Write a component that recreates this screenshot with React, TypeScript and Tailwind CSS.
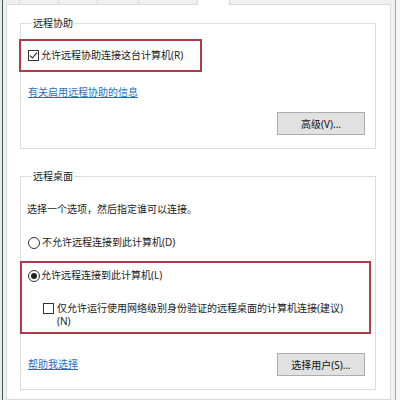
import React from "react";

function CheckBox({ checked }: { checked?: boolean }) {
  return (
    <div className="w-[11px] h-[11px] border border-[#333] bg-white flex items-center justify-center shrink-0">
      {checked && (
        <svg width="9" height="9" viewBox="0 0 9 9">
          <path d="M1 4.6 L3.4 7 L8 1.6" fill="none" stroke="#222" strokeWidth="1.1" />
        </svg>
      )}
    </div>
  );
}

function Radio({ checked }: { checked?: boolean }) {
  return (
    <div className="w-[12px] h-[12px] rounded-full border border-[#333] bg-white flex items-center justify-center shrink-0">
      {checked && <div className="w-[6px] h-[6px] rounded-full bg-[#222]" />}
    </div>
  );
}

function Button({ children }: { children: React.ReactNode }) {
  return (
    <div className="w-[88px] h-[23px] bg-[#e1e1e1] border border-[#adadad] flex items-center justify-center text-[10px] leading-[12px] text-[#111]">
      {children}
    </div>
  );
}

export default function App() {
  return (
    <div
      className="w-[400px] h-[400px] bg-[#f0f0f0] flex overflow-hidden text-[#1a1a1a]"
      style={{ fontFamily: '"Noto Sans", "Noto Sans CJK SC", sans-serif' }}
    >
      <div className="w-[2px] shrink-0 bg-[#e8ecec]" />
      <div className="w-[1px] shrink-0 bg-[#3f5656]" />
      <div className="w-[3px] shrink-0" />
      <div className="w-[385px] shrink-0 flex flex-col">
        <div className="h-[5px] flex shrink-0">
          <div className="w-[13px] border-b border-[#d9d9d9]" />
          <div className="w-[39px] border-l border-b border-[#d9d9d9]" />
          <div className="w-[39px] border-l border-b border-[#d9d9d9]" />
          <div className="w-[41px] border-l border-b border-[#d9d9d9]" />
          <div className="w-[59px] border-l border-b border-[#d9d9d9]" />
          <div className="w-[33px] border-l border-r border-[#d9d9d9] bg-white" />
          <div className="flex-1 border-b border-[#d9d9d9]" />
        </div>
        <div className="flex-1 bg-white border-x border-b border-[#d9d9d9] pl-[13px] pr-[14px] flex flex-col">
          <fieldset className="min-w-0 mt-[12px] border border-[#dcdcdc] pl-[7px] pr-[10px] pb-[13px]">
            <legend className="ml-[4px] px-[1px] text-[10px] leading-[12px]">远程协助</legend>
            <div className="mt-[10px] -ml-[9px] w-[183px] h-[33px] border-2 border-[#b23b4a] pl-[7px] flex items-center gap-[2px] text-[10px] leading-[13px]">
              <CheckBox checked />
              <span>允许远程协助连接这台计算机(R)</span>
            </div>
            <div className="mt-[14px] text-[10px] leading-[13px] text-[#1f6fbf] underline">
              有关启用远程协助的信息
            </div>
            <div className="mt-[13px] flex justify-end">
              <Button>高级(V)...</Button>
            </div>
          </fieldset>
          <fieldset className="min-w-0 mt-[21px] border border-[#dcdcdc] pl-[7px] pr-[10px] pb-[13px]">
            <legend className="ml-[4px] px-[1px] text-[10px] leading-[12px]">远程桌面</legend>
            <div className="mt-[21px] -ml-[1px] text-[10px] leading-[13px]">
              选择一个选项，然后指定谁可以连接。
            </div>
            <div className="mt-[20px] flex items-center gap-[2px] text-[10px] leading-[13px]">
              <Radio />
              <span>不允许远程连接到此计算机(D)</span>
            </div>
            <div className="mt-[12px] -ml-[8px] -mr-[6px] h-[73px] border-2 border-[#b23b4a] pl-[6px] pt-[6px] text-[10px] leading-[13px]">
              <div className="flex items-center gap-[1px]">
                <Radio checked />
                <span>允许远程连接到此计算机(L)</span>
              </div>
              <div className="mt-[20px] ml-[15px] flex items-start gap-[3px]">
                <div className="mt-[1px]">
                  <CheckBox />
                </div>
                <span className="w-[290px]">仅允许运行使用网络级别身份验证的远程桌面的计算机连接(建议)(N)</span>
              </div>
            </div>
            <div className="mt-[19px] flex items-center justify-between">
              <span className="text-[10px] leading-[13px] text-[#1f6fbf] underline">帮助我选择</span>
              <Button>选择用户(S)...</Button>
            </div>
          </fieldset>
        </div>
      </div>
      <div className="w-[4px] shrink-0" />
      <div className="w-[1px] shrink-0 bg-[#a8a8a8]" />
      <div className="flex-1 bg-[#f7f7f7]" />
    </div>
  );
}
